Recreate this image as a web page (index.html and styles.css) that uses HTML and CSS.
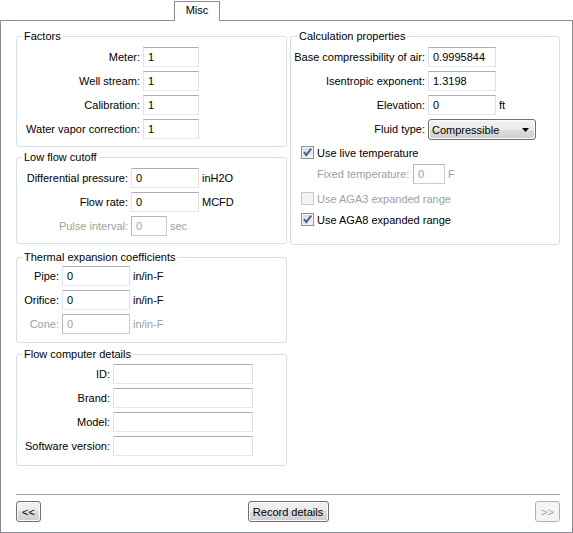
FILE: index.html
```html
<!DOCTYPE html>
<html lang="en">
<head>
<meta charset="utf-8">
<title>Misc</title>
<link rel="stylesheet" href="styles.css">
</head>
<body>
<div class="tabs"><div class="tab">Misc</div></div>
<div class="panel">
  <div class="columns">
    <div class="col">
      <fieldset class="group g-factors">
        <legend>Factors</legend>
        <div class="form form-factors">
          <span class="lbl">Meter:</span><input class="txt" type="text" value="1">
          <span class="lbl">Well stream:</span><input class="txt" type="text" value="1">
          <span class="lbl">Calibration:</span><input class="txt" type="text" value="1">
          <span class="lbl">Water vapor correction:</span><input class="txt" type="text" value="1">
        </div>
      </fieldset>
      <fieldset class="group g-low">
        <legend>Low flow cutoff</legend>
        <div class="form form-low">
          <span class="lbl">Differential pressure:</span><input class="txt" type="text" value="0"><span class="unit">inH2O</span>
          <span class="lbl">Flow rate:</span><input class="txt" type="text" value="0"><span class="unit">MCFD</span>
          <span class="lbl dis">Pulse interval:</span><span class="inline span-rest"><input class="txt narrow" type="text" value="0" disabled><span class="unit dis">sec</span></span>
        </div>
      </fieldset>
      <fieldset class="group g-thermal">
        <legend>Thermal expansion coefficients</legend>
        <div class="form form-thermal">
          <span class="lbl">Pipe:</span><input class="txt" type="text" value="0"><span class="unit">in/in-F</span>
          <span class="lbl">Orifice:</span><input class="txt" type="text" value="0"><span class="unit">in/in-F</span>
          <span class="lbl dis">Cone:</span><input class="txt" type="text" value="0" disabled><span class="unit dis">in/in-F</span>
        </div>
      </fieldset>
      <fieldset class="group g-flow">
        <legend>Flow computer details</legend>
        <div class="form form-flow">
          <span class="lbl">ID:</span><input class="txt" type="text" value="">
          <span class="lbl">Brand:</span><input class="txt" type="text" value="">
          <span class="lbl">Model:</span><input class="txt" type="text" value="">
          <span class="lbl">Software version:</span><input class="txt" type="text" value="">
        </div>
      </fieldset>
    </div>
    <div class="col">
      <fieldset class="group g-calc">
        <legend>Calculation properties</legend>
        <div class="form form-calc">
          <span class="lbl">Base compressibility of air:</span><input class="txt" type="text" value="0.9995844"><span class="unit"></span>
          <span class="lbl">Isentropic exponent:</span><input class="txt" type="text" value="1.3198"><span class="unit"></span>
          <span class="lbl">Elevation:</span><input class="txt" type="text" value="0"><span class="unit">ft</span>
          <span class="lbl">Fluid type:</span>
          <div class="select span-rest">
            <span>Compressible</span>
            <svg class="arrow" width="7" height="4" viewBox="0 0 7 4"><path d="M0 0H7L3.5 4Z" fill="#000"/></svg>
          </div>
        </div>
        <div class="cbrow r-live">
          <span class="cb"><svg viewBox="0 0 11 11" width="11" height="11"><path d="M2 5.2 L4.3 8.2 L9.2 1.6" fill="none" stroke="#4a5f9a" stroke-width="2"/></svg></span>
          <span>Use live temperature</span>
        </div>
        <div class="fixedrow">
          <span class="fixedlbl dis">Fixed temperature:</span>
          <input class="txt tiny" type="text" value="0" disabled>
          <span class="unit dis">F</span>
        </div>
        <div class="cbrow r-aga3 dis">
          <span class="cb off"></span>
          <span>Use AGA3 expanded range</span>
        </div>
        <div class="cbrow r-aga8">
          <span class="cb"><svg viewBox="0 0 11 11" width="11" height="11"><path d="M2 5.2 L4.3 8.2 L9.2 1.6" fill="none" stroke="#4a5f9a" stroke-width="2"/></svg></span>
          <span>Use AGA8 expanded range</span>
        </div>
      </fieldset>
    </div>
  </div>
  <div class="footer">
    <button class="btn btn-prev" type="button">&lt;&lt;</button>
    <button class="btn btn-record" type="button">Record details</button>
    <button class="btn btn-next" type="button" disabled>&gt;&gt;</button>
  </div>
</div>
</body>
</html>
```
FILE: styles.css
```css
* { box-sizing: border-box; }
html, body { margin: 0; padding: 0; background: #fff; }
body {
  font-family: "Liberation Sans", Arial, sans-serif;
  font-size: 11px;
  color: #000;
  width: 573px;
  height: 533px;
  overflow: hidden;
}

/* tab strip */
.tabs { height: 20px; padding: 1px 0 0 174px; display: flex; align-items: flex-start; }
.tab {
  width: 46px;
  height: 20px;
  border: 1px solid #898c95;
  border-bottom: none;
  background: #fff;
  text-align: center;
  line-height: 16px;
  position: relative;
  z-index: 1;
}

/* panel */
.panel {
  height: 513px;
  border: 1px solid #898c95;
  padding: 8px 12px 10px 15px;
  display: flex;
  flex-direction: column;
}
.columns {
  display: grid;
  grid-template-columns: 271px 270px;
  column-gap: 3px;
  align-items: start;
}
.col { display: flex; flex-direction: column; }

/* group boxes */
.group {
  margin: 0;
  min-width: 0;
  border: 1px solid #d5dfe5;
  border-radius: 3px;
  padding: 4px 6px 7px 6px;
}
.group legend { padding: 0 2px; line-height: 14px; margin-left: -1px; }
.g-low { margin-top: 3px; }
.g-thermal { margin-top: 6px; padding-top: 2px; padding-bottom: 8px; }
.g-flow { margin-top: 4px; padding-top: 3px; padding-bottom: 9px; }
.g-calc { padding: 4px 6px 17px 3px; }
.g-calc legend { margin-left: 3px; }

/* forms */
.form {
  display: grid;
  grid-auto-rows: 20px;
  row-gap: 4px;
  column-gap: 3px;
  align-items: center;
}
.form-factors { grid-template-columns: 117px 56px; }
.form-low { grid-template-columns: 105px 68px auto; }
.form-thermal { grid-template-columns: 36px 68px auto; }
.form-flow { grid-template-columns: 87px 140px; }
.form-calc { grid-template-columns: 131px 68px auto; }

.lbl {
  display: flex;
  justify-content: flex-end;
  white-space: nowrap;
  min-width: 0;
  line-height: 20px;
}
.unit { white-space: nowrap; line-height: 20px; }
.dis { color: #a0a0a0; }
.span-rest { grid-column: 2 / -1; }
.inline { display: flex; align-items: center; gap: 3px; }

.txt {
  display: block;
  width: 100%;
  height: 20px;
  margin: 0;
  border: 1px solid;
  border-color: #abadb3 #dbdfe6 #e3e9ef #e2e3ea;
  border-radius: 0;
  padding: 0 0 0 4px;
  font: inherit;
  color: #000;
  background: #fff;
  outline: none;
}
.txt:disabled {
  border-color: #b5b5b5 #cdcdcd #cdcdcd #b5b5b5;
  color: #a0a0a0;
  background: #fff;
}
.txt.narrow { width: 36px; }
.txt.tiny { width: 32px; }

/* dropdown */
.select {
  justify-self: start;
  width: 108px;
  height: 21px;
  border: 1px solid #707070;
  border-radius: 3px;
  background: linear-gradient(#f2f2f2 0%, #ebebeb 50%, #dddddd 50%, #cfcfcf 100%);
  box-shadow: inset 0 0 0 1px #fbfbfb;
  display: flex;
  align-items: center;
  justify-content: space-between;
  padding: 0 6px 0 3px;
  align-self: start;
}
.arrow { display: block; }

/* checkboxes */
.cbrow {
  display: flex;
  align-items: center;
  gap: 3px;
  padding-left: 7px;
  height: 15px;
  white-space: nowrap;
}
.r-live { margin-top: 6px; }
.r-aga3 { margin-top: 7px; }
.r-aga8 { margin-top: 6px; }
.cb {
  flex: none;
  width: 13px;
  height: 13px;
  border: 1px solid #8e8f8f;
  background: linear-gradient(135deg, #d2d5da 0%, #f7f7f7 100%);
  box-shadow: inset 0 0 0 1px #f4f4f4;
  display: flex;
  align-items: center;
  justify-content: center;
}
.cb svg { display: block; }
.cb.off {
  border-color: #c9c9c9;
  background: #f4f4f4;
  box-shadow: none;
}

.fixedrow {
  display: flex;
  align-items: center;
  gap: 3px;
  padding-left: 23px;
  height: 20px;
  margin-top: 4px;
}
.fixedlbl { width: 93px; white-space: nowrap; }

/* footer */
.footer {
  margin-top: auto;
  border-top: 1px solid #a0a0a0;
  padding-top: 6px;
  display: grid;
  grid-template-columns: 1fr auto 1fr;
  align-items: center;
}
.btn {
  height: 21px;
  margin: 0;
  padding: 0;
  font: inherit;
  color: #000;
  border: 1px solid #707070;
  border-radius: 3px;
  background: linear-gradient(#f2f2f2 0%, #ebebeb 50%, #dddddd 50%, #cfcfcf 100%);
  box-shadow: inset 0 0 0 1px #fbfbfb;
}
.btn:disabled {
  border-color: #adb2b5;
  background: #f4f4f4;
  box-shadow: none;
  color: #a0a0a0;
}
.btn-prev { justify-self: start; width: 25px; }
.btn-record { width: 81px; }
.btn-next { justify-self: end; width: 25px; }
```
